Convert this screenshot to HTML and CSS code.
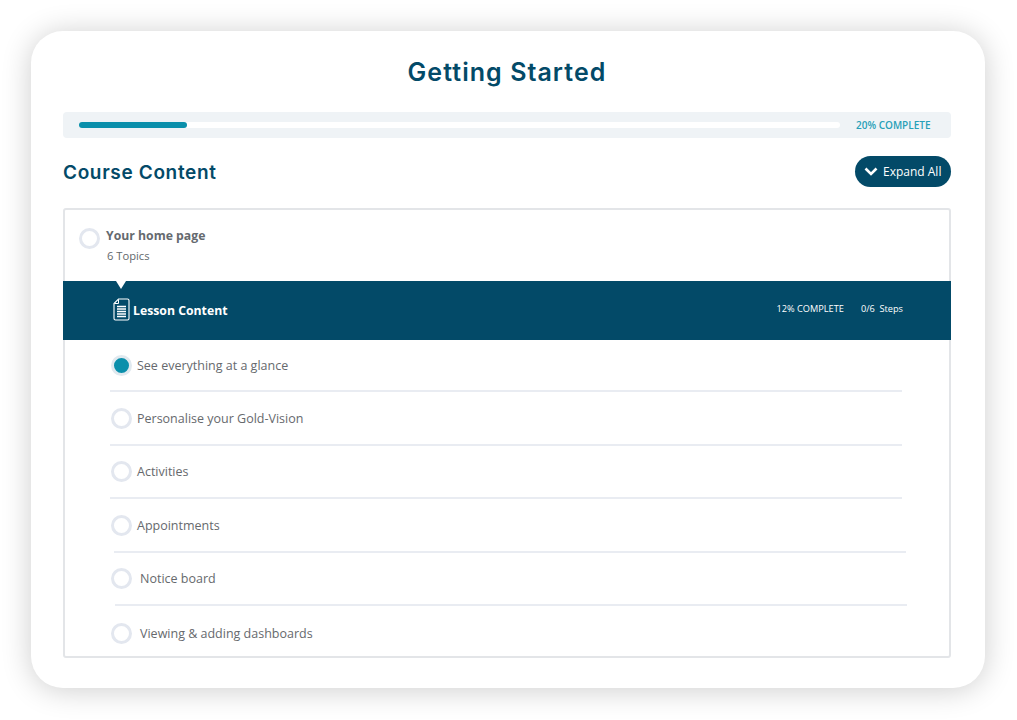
FILE: index.html
```html
<!DOCTYPE html>
<html lang="en">
<head>
<meta charset="utf-8">
<title>Getting Started</title>
<link rel="stylesheet" href="styles.css">
</head>
<body>
<main class="card">
  <h1 class="title">Getting Started</h1>
  <div class="progress">
    <div class="track"><div class="fill"></div></div>
    <span class="progress-label">20% COMPLETE</span>
  </div>
  <div class="heading-row">
    <h2 class="heading">Course Content</h2>
    <button class="expand">
      <svg class="chev" width="14" height="9" viewBox="0 0 14 9"><path d="M1.5 1.500 7 7l5.500-5.500" fill="none" stroke="#fff" stroke-width="2.600"/></svg>
      Expand All
    </button>
  </div>
  <section class="box">
    <div class="topic">
      <span class="radio radio-big"></span>
      <div class="topic-text">
        <div class="topic-name">Your home page</div>
        <div class="topic-count">6 Topics</div>
      </div>
    </div>
    <div class="lesson-bar">
      <span class="notch"></span>
      <svg class="doc" width="17" height="23" viewBox="0 0 17 23" fill="none" stroke="#fff">
        <path d="M5.500 1H14.500a1.500 1.500 0 0 1 1.500 1.500v18a1.500 1.500 0 0 1-1.500 1.500h-12A1.500 1.500 0 0 1 1 20.500V5.500z" stroke-width="1.100"/>
        <path d="M5.500 1.500V5.500H1.500" stroke-width="1"/>
        <path d="M4 8.500h9M4 11h9M4 13.500h9M4 16h9M4 18.500h9" stroke-width="1.300"/>
      </svg>
      <span class="lesson-title">Lesson Content</span>
      <span class="lesson-stat">12% COMPLETE</span>
      <span class="lesson-stat lesson-steps">0/6&nbsp; Steps</span>
    </div>
    <ul class="items">
      <li class="item"><span class="radio radio-on"></span><span class="label">See everything at a glance</span></li>
      <li class="item"><span class="radio"></span><span class="label">Personalise your Gold-Vision</span></li>
      <li class="item"><span class="radio"></span><span class="label">Activities</span></li>
      <li class="item item-shift1"><span class="radio"></span><span class="label">Appointments</span></li>
      <li class="item item-shift2"><span class="radio"></span><span class="label label-shift">Notice board</span></li>
      <li class="item item-last"><span class="radio"></span><span class="label label-shift">Viewing &amp; adding dashboards</span></li>
    </ul>
  </section>
</main>
</body>
</html>
```
FILE: styles.css
```css
* { box-sizing: border-box; }
html, body { margin: 0; height: 100%; }
body {
  width: 1017px;
  height: 720px;
  overflow: hidden;
  background: #fff;
  padding: 31px 32px 32px 31px;
  font-family: "Open Sans", sans-serif;
}
.card {
  width: 954px;
  height: 657px;
  background: #fff;
  border-radius: 32px;
  padding: 0 34px 0 32px;
  box-shadow: 0 2px 30px rgba(0, 0, 0, 0.2);
}
.title {
  margin: 0;
  padding-top: 24px;
  height: 81px;
  text-align: center;
  font-family: Inter, sans-serif;
  font-size: 25px;
  line-height: 34px;
  font-weight: 600;
  letter-spacing: 1.05px;
  color: #034a68;
}
.progress {
  height: 26px;
  background: #eff3f6;
  border-radius: 4px;
  display: flex;
  align-items: center;
  padding: 0 20px 0 16px;
}
.track {
  width: 761px;
  height: 6px;
  background: #fff;
  border-radius: 3px;
}
.fill {
  width: 108px;
  height: 6px;
  border-radius: 3px;
  background: #0a8fab;
}
.progress-label {
  margin-left: 16px;
  font-size: 10px;
  font-weight: 600;
  color: #27a0b8;
  white-space: nowrap;
}
.heading-row {
  height: 70px;
  display: flex;
  align-items: center;
  justify-content: space-between;
  padding-bottom: 1px;
}
.heading {
  margin: 0;
  font-family: Inter, sans-serif;
  font-size: 19px;
  font-weight: 600;
  letter-spacing: 0.65px;
  color: #034a68;
}
.expand {
  width: 96px;
  height: 31px;
  margin-top: -3px;
  border: 0;
  border-radius: 16px;
  background: #034a68;
  color: #fff;
  font-family: "Open Sans", sans-serif;
  font-size: 12px;
  font-weight: 500;
  display: flex;
  align-items: center;
  gap: 5px;
  padding: 0 0 0 9px;
  white-space: nowrap;
}
.chev { flex: none; }
.box {
  height: 450px;
  border: 2px solid #e3e5e8;
  border-radius: 3px;
}
.topic {
  height: 71px;
  display: flex;
  padding: 17px 0 0 14px;
}
.radio {
  flex: none;
  width: 21px;
  height: 21px;
  border-radius: 50%;
  border: 3px solid #e3e7ef;
  background: #fff;
}
.radio-big { margin-top: 1px; }
.radio-on {
  background: #0a8fab;
  border-color: #e0e9ef;
}
.topic-text { margin-left: 6px; }
.topic-name {
  font-size: 12.250px;
  line-height: 17px;
  font-weight: 700;
  color: #656a6f;
}
.topic-count {
  margin-top: 4px;
  margin-left: 1px;
  font-size: 11.200px;
  line-height: 15px;
  color: #63686c;
}
.lesson-bar {
  position: relative;
  height: 59px;
  margin: 0 -2px;
  background: #034a68;
  display: flex;
  align-items: center;
  padding: 0 48px 0 50px;
  color: #fff;
}
.notch {
  position: absolute;
  left: 53px;
  top: 0;
  border-left: 5.500px solid transparent;
  border-right: 5.500px solid transparent;
  border-top: 8px solid #fff;
}
.doc {
  flex: none;
  margin-top: -2px;
}
.lesson-title {
  margin-left: 3px;
  font-size: 12.250px;
  font-weight: 700;
  flex: 1;
  margin-top: -1px;
}
.lesson-stat {
  font-size: 9.200px;
  font-weight: 500;
  margin-top: -5px;
  white-space: nowrap;
}
.lesson-steps { margin-left: 17px; }
.items {
  list-style: none;
  margin: -1px 0 0;
  padding: 0 0 0 45px;
}
.item {
  width: 792px;
  height: 53.400px;
  border-bottom: 2px solid #e9ecf2;
  display: flex;
  align-items: center;
  padding-top: 1px;
}
.radio:not(.radio-big) { margin-left: 1px; }
.label {
  margin-left: 5px;
  font-size: 12.500px;
  color: #66696d;
  white-space: nowrap;
}
.label-shift { margin-left: 8px; }
.item-shift1 { margin-left: 4px; }
.item-shift1 .radio { margin-left: -3px; }
.item-shift2 { margin-left: 5px; }
.item-shift2 .radio { margin-left: -4px; }
.item-last { border-bottom: 0; }
```
